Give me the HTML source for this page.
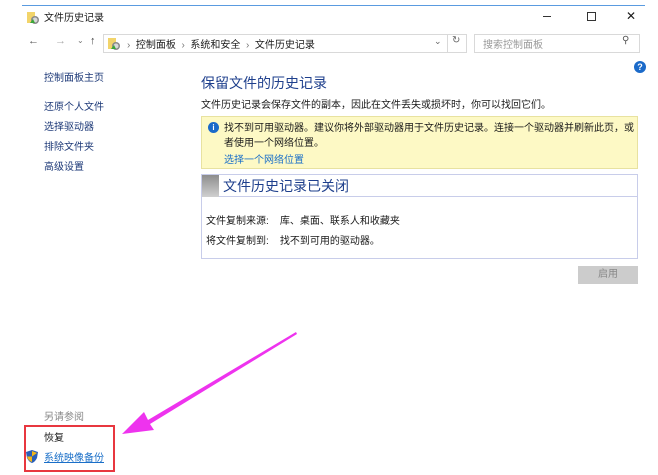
<!DOCTYPE html>
<html><head><meta charset="utf-8"><style>
*{margin:0;padding:0;box-sizing:border-box}
body{width:658px;height:475px;background:#fff;position:relative;overflow:hidden;font-family:"Liberation Sans","Noto Sans CJK SC",sans-serif;font-size:10px;color:#1a1a1a}
.a{position:absolute;white-space:nowrap}
.l{color:#1e3a78}
.blue{color:#1a6fc8}
</style></head><body>
<div class="a" style="left:22px;top:5px;width:623px;height:1px;background:#5a9be0"></div>
<svg class="a" style="left:26px;top:11px" width="14" height="14"><rect x="1" y="1" width="8" height="11" fill="#f2d46a"/><circle cx="9" cy="9" r="4" fill="#8a8a8a"/><circle cx="9" cy="9" r="2.5" fill="#d8d8d8"/><path d="M4 12 L7 8 L9 12Z" fill="#3aa53a"/></svg>
<div class="a" style="left:44px;top:9px;font-size:10px">文件历史记录</div>
<div class="a" style="left:543px;top:16px;width:8px;height:1px;background:#333"></div>
<div class="a" style="left:587px;top:12px;width:9px;height:9px;border:1px solid #333"></div>
<div class="a" style="left:626px;top:9px;font-size:12px">✕</div>
<div class="a" style="left:28px;top:35px;font-size:11px;color:#555">←</div>
<div class="a" style="left:55px;top:35px;font-size:11px;color:#aaa">→</div>
<div class="a" style="left:77px;top:36px;font-size:8px;color:#777">⌄</div>
<div class="a" style="left:90px;top:35px;font-size:11px;color:#444">↑</div>
<div class="a" style="left:103px;top:34px;width:364px;height:19px;border:1px solid #d9d9d9"></div>
<div class="a" style="left:447px;top:34px;width:1px;height:19px;background:#d9d9d9"></div>
<svg class="a" style="left:107px;top:37px" width="14" height="14"><rect x="1" y="1" width="8" height="11" fill="#f2d46a"/><circle cx="9" cy="9" r="4" fill="#8a8a8a"/><circle cx="9" cy="9" r="2.5" fill="#d8d8d8"/><path d="M4 12 L7 8 L9 12Z" fill="#3aa53a"/></svg>
<div class="a" style="left:127px;top:36px;font-size:10px"><span style="color:#777">›</span>&nbsp; 控制面板 &nbsp;<span style="color:#777">›</span>&nbsp; 系统和安全 &nbsp;<span style="color:#777">›</span>&nbsp; 文件历史记录</div>
<div class="a" style="left:434px;top:36px;font-size:9px;color:#666">⌄</div>
<div class="a" style="left:452px;top:35px;font-size:10px;color:#666">↻</div>
<div class="a" style="left:474px;top:34px;width:166px;height:19px;border:1px solid #d9d9d9"></div>
<div class="a" style="left:483px;top:36px;color:#999">搜索控制面板</div>
<div class="a" style="left:622px;top:35px;font-size:10px;color:#555">⚲</div>
<div class="a" style="left:634px;top:61px;width:12px;height:12px;border-radius:50%;background:#1b6ac9;color:#fff;font-size:9px;font-weight:bold;text-align:center;line-height:12px">?</div>
<div class="a l" style="left:44px;top:69px">控制面板主页</div>
<div class="a l" style="left:44px;top:98px">还原个人文件</div>
<div class="a l" style="left:44px;top:118px">选择驱动器</div>
<div class="a l" style="left:44px;top:138px">排除文件夹</div>
<div class="a l" style="left:44px;top:158px">高级设置</div>
<div class="a" style="left:201px;top:73px;font-size:14px;color:#1e3f8c">保留文件的历史记录</div>
<div class="a" style="left:201px;top:96px">文件历史记录会保存文件的副本，因此在文件丢失或损坏时，你可以找回它们。</div>
<div class="a" style="left:201px;top:116px;width:437px;height:53px;background:#fdf9c5;border:1px solid #e8e2a0"></div>
<div class="a" style="left:208px;top:122px;width:11px;height:11px;border-radius:50%;background:#1b6ac9;color:#fff;font-size:8px;font-weight:bold;text-align:center;line-height:11px">i</div>
<div class="a" style="left:224px;top:121px;line-height:15px">找不到可用驱动器。建议你将外部驱动器用于文件历史记录。连接一个驱动器并刷新此页，或<br>者使用一个网络位置。</div>
<div class="a blue" style="left:224px;top:151px">选择一个网络位置</div>
<div class="a" style="left:201px;top:174px;width:437px;height:85px;border:1px solid #c8cdea"></div>
<div class="a" style="left:202px;top:175px;width:435px;height:22px;border-bottom:1px solid #c8cdea"></div>
<div class="a" style="left:202px;top:175px;width:17px;height:22px;background:linear-gradient(#8d8d8d,#d0d0d0)"></div>
<div class="a" style="left:223px;top:176px;font-size:14px;color:#1e3f8c">文件历史记录已关闭</div>
<div class="a" style="left:206px;top:212px">文件复制来源: &nbsp;&nbsp;&nbsp;库、桌面、联系人和收藏夹</div>
<div class="a" style="left:206px;top:232px">将文件复制到: &nbsp;&nbsp;&nbsp;找不到可用的驱动器。</div>
<div class="a" style="left:578px;top:266px;width:60px;height:18px;background:#ccc;color:#888;text-align:center;line-height:18px">启用</div>
<div class="a" style="left:44px;top:408px;color:#888">另请参阅</div>
<div class="a" style="left:24px;top:425px;width:91px;height:47px;border:2px solid #e8373f"></div>
<div class="a" style="left:44px;top:429px">恢复</div>
<svg class="a" style="left:26px;top:450px" width="12" height="13"><path d="M6 0 L12 2 L11 8 Q9 12 6 13 Q3 12 1 8 L0 2Z" fill="#2a5fb8"/><path d="M6 1 L11 3 L6 6.5Z" fill="#f2b619"/><path d="M1 6.5 L6 6.5 L6 12 Q3 11 1.5 8Z" fill="#f2b619"/></svg>
<div class="a blue" style="left:44px;top:449px;text-decoration:underline">系统映像备份</div>
<svg class="a" style="left:0;top:0" width="658" height="475"><path d="M296 332 L148 420 L144 412 L122 434 L154 430 L150 424 L297 334Z" fill="#ee33ee"/></svg>
</body></html>
